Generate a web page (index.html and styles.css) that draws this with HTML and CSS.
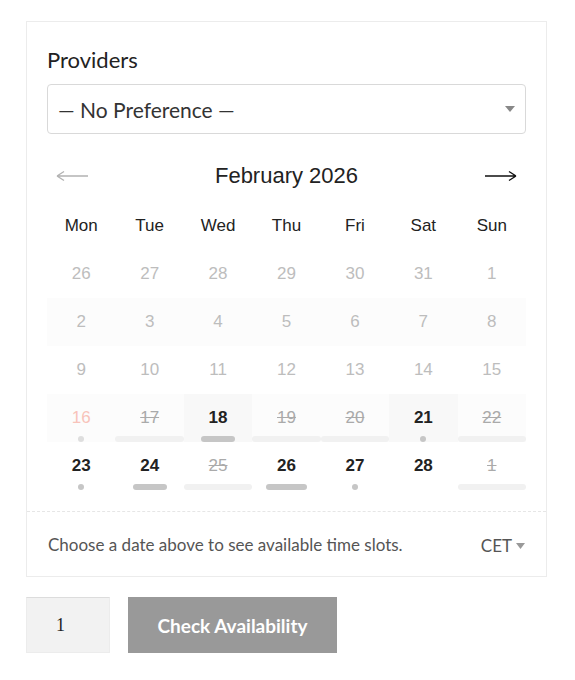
FILE: index.html
```html
<!DOCTYPE html>
<html>
<head>
<meta charset="utf-8">
<link rel="stylesheet" href="styles.css">
</head>
<body>
<div class="page">
  <div class="card">
    <div class="card-body">
      <div class="label">Providers</div>
      <div class="select">
        <span>— No Preference —</span>
        <svg class="caret" width="10" height="6" viewBox="0 0 10 6"><path d="M0 0H10L5 6Z" fill="#888"/></svg>
      </div>
      <div class="nav">
        <svg class="arrow" width="32" height="12" viewBox="0 0 32 12"><path d="M1 6H32M1 6L8 1.5M1 6L8 10.5" stroke="#b3b3b3" stroke-width="1.4" fill="none"/></svg>
        <div class="title">February 2026</div>
        <svg class="arrow" width="32" height="12" viewBox="0 0 32 12"><path d="M0 6H31M31 6L24 1.5M31 6L24 10.5" stroke="#111" stroke-width="1.4" fill="none"/></svg>
      </div>
      <div class="weekdays">
        <div>Mon</div><div>Tue</div><div>Wed</div><div>Thu</div><div>Fri</div><div>Sat</div><div>Sun</div>
      </div>
      <div class="week">
        <div class="day off"><span>26</span></div>
        <div class="day off"><span>27</span></div>
        <div class="day off"><span>28</span></div>
        <div class="day off"><span>29</span></div>
        <div class="day off"><span>30</span></div>
        <div class="day off"><span>31</span></div>
        <div class="day off"><span>1</span></div>
      </div>
      <div class="week striped">
        <div class="day off"><span>2</span></div>
        <div class="day off"><span>3</span></div>
        <div class="day off"><span>4</span></div>
        <div class="day off"><span>5</span></div>
        <div class="day off"><span>6</span></div>
        <div class="day off"><span>7</span></div>
        <div class="day off"><span>8</span></div>
      </div>
      <div class="week">
        <div class="day off"><span>9</span></div>
        <div class="day off"><span>10</span></div>
        <div class="day off"><span>11</span></div>
        <div class="day off"><span>12</span></div>
        <div class="day off"><span>13</span></div>
        <div class="day off"><span>14</span></div>
        <div class="day off"><span>15</span></div>
      </div>
      <div class="week striped">
        <div class="day today"><span>16</span><i class="dot light"></i></div>
        <div class="day full"><span>17</span><i class="bar wide"></i></div>
        <div class="day avail hl"><span>18</span><i class="bar b34"></i></div>
        <div class="day full"><span>19</span><i class="bar wide"></i></div>
        <div class="day full"><span>20</span><i class="bar wide"></i></div>
        <div class="day avail hl"><span>21</span><i class="dot"></i></div>
        <div class="day full"><span>22</span><i class="bar wide"></i></div>
      </div>
      <div class="week">
        <div class="day avail"><span>23</span><i class="dot"></i></div>
        <div class="day avail"><span>24</span><i class="bar b34"></i></div>
        <div class="day full"><span>25</span><i class="bar wide"></i></div>
        <div class="day avail"><span>26</span><i class="bar b41"></i></div>
        <div class="day avail"><span>27</span><i class="dot"></i></div>
        <div class="day avail"><span>28</span></div>
        <div class="day full"><span>1</span><i class="bar wide"></i></div>
      </div>
    </div>
    <div class="footer">
      <span class="hint">Choose a date above to see available time slots.</span>
      <span class="tz">CET <svg width="9" height="6" viewBox="0 0 9 6"><path d="M0 0H9L4.5 6Z" fill="#999"/></svg></span>
    </div>
  </div>
  <div class="actions">
    <div class="qty">1</div>
    <div class="btn">Check Availability</div>
  </div>
</div>
</body>
</html>
```

FILE: styles.css
```css
* { box-sizing: border-box; }
html, body { margin: 0; padding: 0; background: #fff; }
body { font-family: Lato, "Liberation Sans", sans-serif; color: #333; }

.page { padding: 21px 0 0 26px; }

.card {
  width: 521px;
  border: 1px solid #ececec;
  background: #fff;
}
.card-body { padding: 24px 20px 21px; }

.label {
  font-size: 22px;
  line-height: 28px;
  color: #222;
}
.select {
  margin-top: 10px;
  height: 50px;
  border: 1px solid #d9d9d9;
  border-radius: 4px;
  display: flex;
  align-items: center;
  justify-content: space-between;
  padding: 0 10px 0 10px;
  font-size: 21px;
  color: #333;
}

.nav {
  margin-top: 16px;
  height: 51px;
  display: flex;
  align-items: center;
  justify-content: space-between;
  padding: 0 9px;
}
.title {
  font-family: "Liberation Sans", Arial, sans-serif;
  font-size: 22px;
  color: #222;
}

.weekdays {
  display: grid;
  grid-template-columns: repeat(7, 1fr);
  height: 49px;
  align-items: center;
  text-align: center;
  font-family: "Liberation Sans", Arial, sans-serif;
  font-size: 17px;
  color: #222;
}

.week {
  display: grid;
  grid-template-columns: repeat(7, 1fr);
  height: 48px;
}
.week.striped { background: #fcfcfc; }

.day {
  display: flex;
  flex-direction: column;
  align-items: center;
  padding-top: 14px;
  font-family: "Liberation Sans", Arial, sans-serif;
  font-size: 17px;
  line-height: 20px;
}
.day span { display: block; height: 20px; }
.day.hl { background: #f8f8f8; }
.off { color: #bdbdbd; }
.today { color: #f8c3ba; }
.full { color: #aaa; }
.full span { text-decoration: line-through; }
.avail { color: #222; font-weight: bold; }

.dot, .bar {
  display: block;
  margin-top: 8px;
  height: 6px;
  border-radius: 3px;
  background: #c6c6c6;
}
.dot { width: 6px; }
.dot.light { background: #dedede; }
.bar.wide { align-self: stretch; background: #f1f1f1; }
.bar.b34 { width: 34px; }
.bar.b41 { width: 41px; }

.footer {
  border-top: 1px dashed #e6e6e6;
  height: 65px;
  display: flex;
  align-items: center;
  justify-content: space-between;
  padding: 0 21px;
}
.hint { font-size: 17px; color: #555; }
.tz { font-size: 17px; color: #555; display: flex; align-items: center; gap: 4px; padding-top: 3px; }

.actions {
  display: flex;
  gap: 18px;
  margin-top: 20px;
}
.qty {
  width: 84px;
  height: 56px;
  background: #f2f2f2;
  border: 1px solid #ececec;
  border-top-color: #dcdcdc;
  display: flex;
  align-items: center;
  padding-left: 29px;
  font-family: "Liberation Serif", serif;
  font-size: 18px;
  color: #222;
}
.btn {
  width: 209px;
  height: 56px;
  background: #999;
  color: #fff;
  font-weight: bold;
  font-size: 19px;
  display: flex;
  align-items: center;
  justify-content: center;
}
```
